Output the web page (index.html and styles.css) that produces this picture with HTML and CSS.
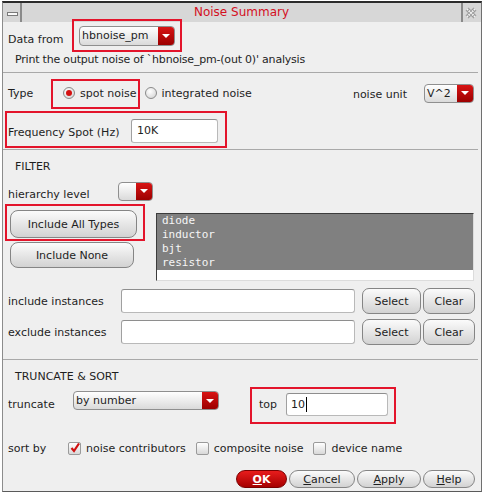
FILE: index.html
```html
<!DOCTYPE html>
<html>
<head>
<meta charset="utf-8">
<link rel="stylesheet" href="styles.css">
</head>
<body>
<div class="stage">
  <div class="window">
    <div class="titlebar">
      <div class="tb-btn tb-min"><span class="min-glyph"></span></div>
      <div class="tb-title">Noise Summary</div>
      <div class="tb-btn tb-close">
        <svg width="12" height="12" viewBox="0 0 12 12"><path d="M2 2 L10 10 M10 2 L2 10" stroke="#9a9a9a" stroke-width="4" fill="none"/><path d="M2 2 L10 10 M10 2 L2 10" stroke="#f4f4f4" stroke-width="2" stroke-dasharray="1.5 1" fill="none"/></svg>
      </div>
    </div>

    <div class="row row-data">
      <span class="lbl lbl-data">Data from</span>
      <div class="combo combo-data"><span class="combo-text">hbnoise_pm</span><span class="combo-arrow"></span></div>
    </div>
    <div class="note">Print the output noise of `hbnoise_pm-(out 0)' analysis</div>
    <div class="sep sep-1"></div>

    <div class="row row-type">
      <span class="lbl lbl-type">Type</span>
      <span class="radio on"></span><span class="opt">spot noise</span>
      <span class="radio radio-2"></span><span class="opt">integrated noise</span>
      <span class="spacer"></span>
      <span class="lbl-unit">noise unit</span>
      <div class="combo combo-unit"><span class="combo-text">V^2</span><span class="combo-arrow"></span></div>
    </div>
    <div class="row row-freq">
      <span class="lbl lbl-freq">Frequency Spot (Hz)</span>
      <div class="input input-freq">10K</div>
    </div>
    <div class="sep"></div>

    <div class="heading">FILTER</div>
    <div class="row row-hier">
      <span class="lbl lbl-hier">hierarchy level</span>
      <div class="combo combo-hier"><span class="combo-text"></span><span class="combo-arrow"></span></div>
    </div>
    <div class="filter">
      <div class="filter-btns">
        <div class="btn btn-all">Include All Types</div>
        <div class="btn btn-none">Include None</div>
      </div>
      <div class="listbox">
        <div class="list-items">
          <div>diode</div>
          <div>inductor</div>
          <div>bjt</div>
          <div>resistor</div>
        </div>
      </div>
    </div>
    <div class="row row-inc">
      <span class="lbl lbl-inst">include instances</span>
      <div class="input input-inst"></div>
      <div class="btn btn-sel">Select</div>
      <div class="btn btn-clr">Clear</div>
    </div>
    <div class="row row-exc">
      <span class="lbl lbl-inst">exclude instances</span>
      <div class="input input-inst"></div>
      <div class="btn btn-sel">Select</div>
      <div class="btn btn-clr">Clear</div>
    </div>
    <div class="sep sep-3"></div>

    <div class="heading">TRUNCATE &amp; SORT</div>
    <div class="row row-trunc">
      <span class="lbl lbl-trunc">truncate</span>
      <div class="combo combo-trunc"><span class="combo-text">by number</span><span class="combo-arrow"></span></div>
      <span class="lbl-top">top</span>
      <div class="input input-top">10<span class="caret"></span></div>
    </div>
    <div class="row row-sort">
      <span class="lbl lbl-sort">sort by</span>
      <span class="check on"><svg width="10" height="10" viewBox="0 0 10 10"><path d="M1.5 5 L4 8 L9 0.5" stroke="#d01010" stroke-width="2.2" fill="none"/></svg></span>
      <span class="opt opt-c">noise contributors</span>
      <span class="check"></span>
      <span class="opt opt-c">composite noise</span>
      <span class="check"></span>
      <span class="opt">device name</span>
    </div>
    <div class="row row-actions">
      <div class="pbtn pbtn-ok"><u>O</u>K</div>
      <div class="pbtn pbtn-cancel"><u>C</u>ancel</div>
      <div class="pbtn pbtn-apply"><u>A</u>pply</div>
      <div class="pbtn pbtn-help"><u>H</u>elp</div>
    </div>
  </div>

  <div class="hl hl-1"></div>
  <div class="hl hl-2"></div>
  <div class="hl hl-3"></div>
  <div class="hl hl-4"></div>
  <div class="hl hl-5"></div>
</div>
</body>
</html>
```

FILE: styles.css
```css
* { box-sizing: border-box; }
html, body { margin: 0; padding: 0; background: #ffffff; }
body {
  font-family: "DejaVu Sans", "Liberation Sans", sans-serif;
  font-size: 11px;
  color: #1e1e1e;
}
.stage { position: relative; width: 484px; height: 494px; overflow: hidden; }
.window {
  margin: 1px 0 0 2px;
  width: 480px;
  height: 491px;
  border-top: 2px solid #2b2b2b;
  border-left: 1px solid #8c8c8c;
  border-right: 1px solid #6f6f6f;
  border-bottom: 1px solid #5a5a5a;
  background: #efefef;
  overflow: hidden;
  display: flex;
  flex-direction: column;
}

/* title bar */
.titlebar { flex: none; height: 19px; display: flex; background: #d7d7d7; }
.tb-btn { flex: none; width: 18px; display: flex; justify-content: center; background: #d7d7d7; }
.tb-min { margin-left: 1px; border-right: 2px solid #8a8a8a; align-items: flex-end; padding-bottom: 6px; }
.min-glyph { width: 11px; height: 4px; background: #fafafa; border: 1px solid #7a7a7a; }
.tb-close { margin-right: 2px; border-left: 2px solid #8a8a8a; align-items: center; }
.tb-title { flex: 1; text-align: center; color: #d40f1e; font-size: 12px; line-height: 19px; }

/* generic rows */
.row { flex: none; display: flex; align-items: center; padding-left: 5px; padding-right: 7px; }
.lbl { flex: none; }
.spacer { flex: 1; }
.opt { flex: none; }

.row-data { height: 28px; }
.lbl-data { width: 71px; padding-top: 7px; }
.note { flex: none; height: 18px; line-height: 16px; padding-top: 2px; padding-left: 12px; letter-spacing: -0.2px; }

.sep { flex: none; height: 1px; background: #a9a9a9; margin-right: 3px; }
.sep-1 { margin-top: 4px; }
.sep-3 { margin-top: 12px; }

.row-type { height: 40px; }
.lbl-type { width: 55px; }
.radio {
  flex: none; width: 12px; height: 12px; border-radius: 50%;
  border: 1px solid #8a8a8a;
  background: radial-gradient(circle at 40% 35%, #ffffff, #cfcfcf);
  display: flex; align-items: center; justify-content: center;
  margin-right: 5px;
}
.radio.on::after { content: ""; width: 6px; height: 6px; border-radius: 50%; background: #d41010; }
.radio-2 { margin-left: 8px; }
.lbl-unit { margin-right: 17px; padding-top: 2px; }

.row-freq { height: 36px; }
.lbl-freq { width: 123px; padding-top: 2px; }

.heading { flex: none; height: 28px; line-height: 28px; padding-top: 3px; padding-left: 12px; }

.row-hier { height: 26px; }
.lbl-hier { width: 110px; padding-top: 6px; }

/* combo */
.combo {
  flex: none; display: flex; height: 20px;
  border: 1px solid #8f8f8f; border-radius: 4px;
  background: linear-gradient(#ffffff, #dadada);
  overflow: hidden;
}
.combo-text { flex: 1; padding-left: 2px; line-height: 18px; white-space: nowrap; }
.combo-arrow {
  flex: none; width: 16px;
  background: linear-gradient(#d81414, #9c0000);
  display: flex; align-items: center; justify-content: center;
}
.combo-arrow::after {
  content: ""; width: 0; height: 0;
  border-left: 4px solid transparent; border-right: 4px solid transparent;
  border-top: 4px solid #ffffff;
}
.combo-data { width: 96px; }
.combo-unit { width: 50px; height: 19px; }
.combo-hier { width: 35px; height: 19px; }
.combo-trunc { width: 146px; height: 19px; margin-bottom: 7px; }

/* input */
.input {
  flex: none; height: 24px; background: #ffffff;
  border: 1px solid #b9b9b9; border-top-color: #8e8e8e; border-left-color: #a0a0a0;
  border-radius: 3px; line-height: 22px; padding-left: 5px;
}
.input-freq { width: 87px; }
.input-inst { width: 234px; }
.input-top { width: 102px; height: 23px; line-height: 21px; padding-left: 4px; display: flex; align-items: center; }
.caret { display: inline-block; width: 1px; height: 15px; background: #000; margin-left: 1px; }

/* buttons */
.btn {
  flex: none; display: flex; align-items: center; justify-content: center;
  border: 1px solid #858585; border-radius: 8px;
  background: linear-gradient(#fbfbfb, #d2d2d2);
  color: #1e1e1e;
}
.filter { flex: none; height: 81px; display: flex; padding-left: 7px; }
.filter-btns { flex: none; width: 127px; display: flex; flex-direction: column; padding-top: 6px; gap: 4px; }
.btn-all { width: 127px; height: 28px; }
.btn-none { width: 124px; height: 26px; }
.listbox {
  flex: none; margin-left: 19px; margin-top: 9px;
  width: 318px; height: 68px;
  border: 1px solid; border-color: #3c3c3c #dcdcdc #dcdcdc #3c3c3c;
  background: #ffffff;
}
.list-items {
  background: #808080; color: #f6f6f6;
  font-family: "DejaVu Sans Mono", "Liberation Mono", monospace;
  font-size: 11px; line-height: 14px; padding-left: 5px;
}

.row-inc { height: 32px; }
.row-exc { height: 30px; }
.lbl-inst { width: 113px; }
.btn-sel { width: 59px; height: 26px; margin-left: 7px; border-radius: 7px; }
.btn-clr { width: 52px; height: 26px; margin-left: 2px; border-radius: 7px; }

.row-trunc { height: 32px; }
.lbl-trunc { width: 65px; padding-top: 1px; }
.lbl-top { margin-left: 40px; margin-right: 9px; }

.row-sort { height: 24px; margin-top: 16px; }
.lbl-sort { width: 60px; }
.check {
  flex: none; width: 13px; height: 13px;
  border: 1px solid #9a9a9a; border-radius: 2px;
  background: linear-gradient(#ffffff, #d8d8d8);
  display: flex; align-items: center; justify-content: center;
  margin-right: 5px;
}
.opt-c { margin-right: 10px; }

.row-actions { height: 18px; margin-top: 10px; justify-content: flex-end; gap: 2px; padding-right: 6px; }
.pbtn {
  flex: none; height: 18px; border-radius: 9px;
  border: 1px solid #858585;
  background: linear-gradient(#fbfbfb, #d2d2d2);
  display: flex; align-items: center; justify-content: center;
}
.pbtn-ok {
  width: 51px; color: #ffffff; font-weight: bold;
  border-color: #7a0000;
  background: linear-gradient(#e81c1c, #a60000);
}
.pbtn-cancel { width: 66px; }
.pbtn-apply { width: 64px; }
.pbtn-help { width: 52px; }

/* red annotation boxes */
.hl { position: absolute; border: 2px solid #e3142b; }
.hl-1 { left: 72px; top: 19px; width: 110px; height: 33px; }
.hl-2 { left: 51px; top: 79px; width: 89px; height: 30px; }
.hl-3 { left: 5px; top: 111px; width: 222px; height: 37px; }
.hl-4 { left: 5px; top: 204px; width: 140px; height: 37px; }
.hl-5 { left: 250px; top: 387px; width: 146px; height: 37px; }
```
